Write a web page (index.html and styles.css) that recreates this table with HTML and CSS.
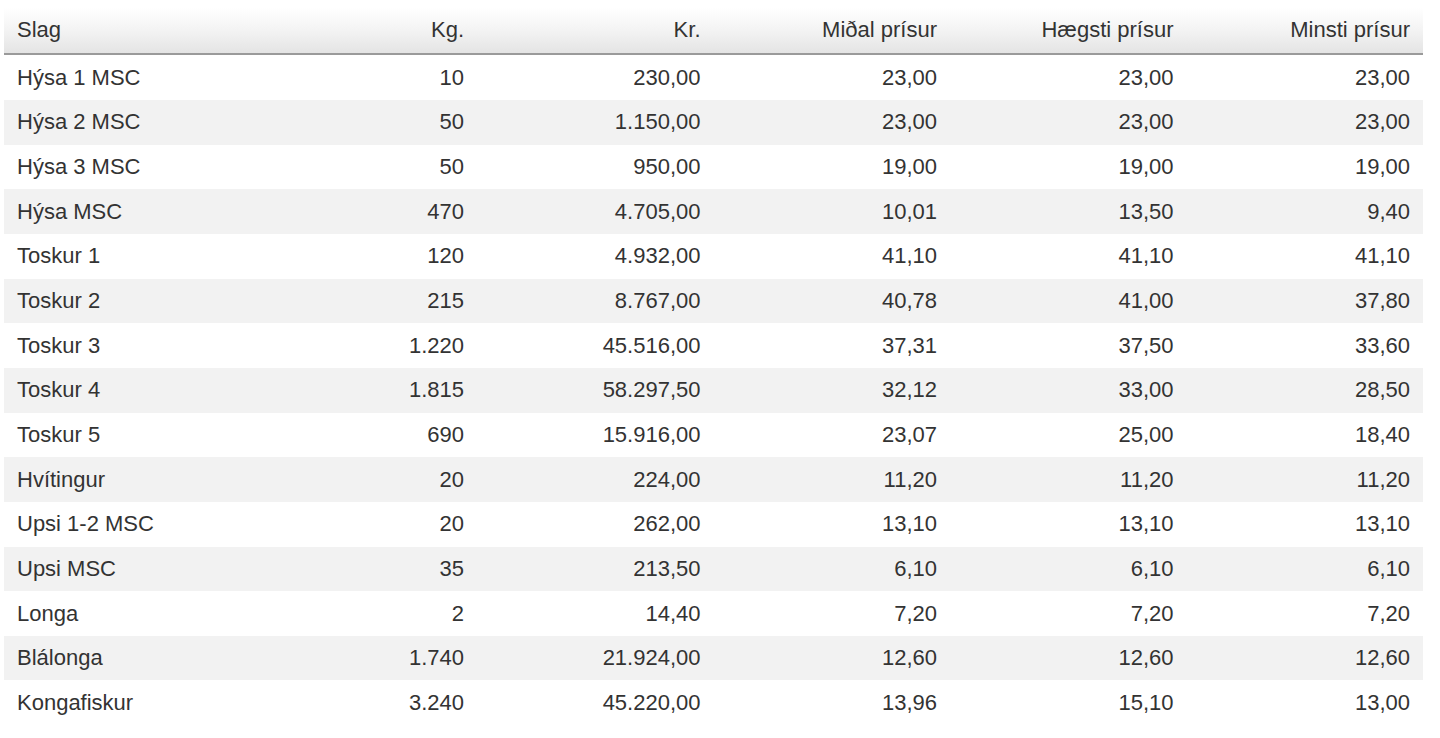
FILE: index.html
```html
<!DOCTYPE html>
<html lang="is">
<head>
<meta charset="utf-8">
<title>Slag</title>
<link rel="stylesheet" href="styles.css">
</head>
<body>
<table class="prices">
  <thead>
    <tr>
      <th class="name">Slag</th>
      <th>Kg.</th>
      <th>Kr.</th>
      <th>Miðal prísur</th>
      <th>Hægsti prísur</th>
      <th>Minsti prísur</th>
    </tr>
  </thead>
  <tbody>
    <tr><td class="name">Hýsa 1 MSC</td><td>10</td><td>230,00</td><td>23,00</td><td>23,00</td><td>23,00</td></tr>
    <tr><td class="name">Hýsa 2 MSC</td><td>50</td><td>1.150,00</td><td>23,00</td><td>23,00</td><td>23,00</td></tr>
    <tr><td class="name">Hýsa 3 MSC</td><td>50</td><td>950,00</td><td>19,00</td><td>19,00</td><td>19,00</td></tr>
    <tr><td class="name">Hýsa MSC</td><td>470</td><td>4.705,00</td><td>10,01</td><td>13,50</td><td>9,40</td></tr>
    <tr><td class="name">Toskur 1</td><td>120</td><td>4.932,00</td><td>41,10</td><td>41,10</td><td>41,10</td></tr>
    <tr><td class="name">Toskur 2</td><td>215</td><td>8.767,00</td><td>40,78</td><td>41,00</td><td>37,80</td></tr>
    <tr><td class="name">Toskur 3</td><td>1.220</td><td>45.516,00</td><td>37,31</td><td>37,50</td><td>33,60</td></tr>
    <tr><td class="name">Toskur 4</td><td>1.815</td><td>58.297,50</td><td>32,12</td><td>33,00</td><td>28,50</td></tr>
    <tr><td class="name">Toskur 5</td><td>690</td><td>15.916,00</td><td>23,07</td><td>25,00</td><td>18,40</td></tr>
    <tr><td class="name">Hvítingur</td><td>20</td><td>224,00</td><td>11,20</td><td>11,20</td><td>11,20</td></tr>
    <tr><td class="name">Upsi 1-2 MSC</td><td>20</td><td>262,00</td><td>13,10</td><td>13,10</td><td>13,10</td></tr>
    <tr><td class="name">Upsi MSC</td><td>35</td><td>213,50</td><td>6,10</td><td>6,10</td><td>6,10</td></tr>
    <tr><td class="name">Longa</td><td>2</td><td>14,40</td><td>7,20</td><td>7,20</td><td>7,20</td></tr>
    <tr><td class="name">Blálonga</td><td>1.740</td><td>21.924,00</td><td>12,60</td><td>12,60</td><td>12,60</td></tr>
    <tr><td class="name">Kongafiskur</td><td>3.240</td><td>45.220,00</td><td>13,96</td><td>15,10</td><td>13,00</td></tr>
  </tbody>
</table>
</body>
</html>
```
FILE: styles.css
```css
html, body {
  margin: 0;
  padding: 0;
  background: #ffffff;
}

body {
  padding: 7.5px 0 0 4px;
  font-family: "Liberation Sans", Arial, Helvetica, sans-serif;
  font-size: 22px;
  color: #333333;
}

.prices {
  width: 1419px;
  border-collapse: collapse;
  border-spacing: 0;
  table-layout: fixed;
}

.prices th,
.prices td {
  padding: 0 13px;
  text-align: right;
  font-weight: normal;
  white-space: nowrap;
}

.prices .name {
  text-align: left;
}

.prices thead th {
  height: 45.8px;
  background: linear-gradient(to bottom, #ffffff 0%, #f3f3f3 50%, #e4e4e4 100%);
  border-bottom: 2px solid #9a9a9a;
  color: #333333;
}

.prices tbody td {
  height: 44.667px;
}

.prices tbody tr:nth-child(even) td {
  background: #f2f2f2;
}
```
